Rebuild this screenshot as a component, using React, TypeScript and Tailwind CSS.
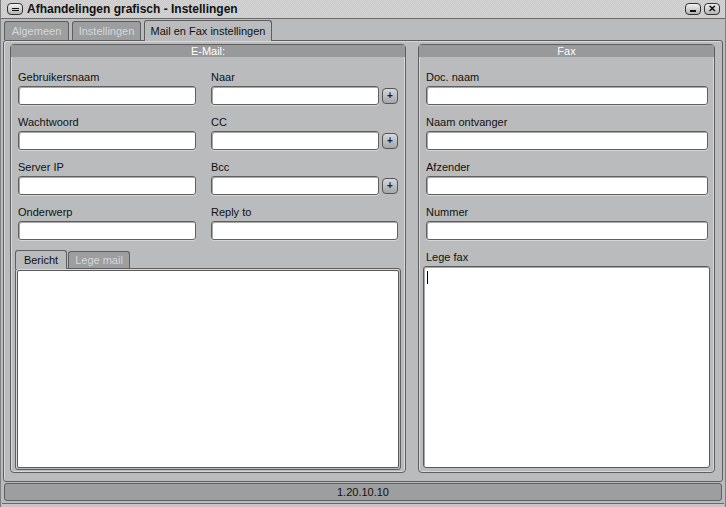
import React from "react";

const font = "font-['Liberation_Sans',Arial,sans-serif]";

function Field({ label, plus }: { label: string; plus?: boolean }) {
  return (
    <div className="flex flex-col">
      <div className="h-[16px] pt-[1px] text-[11px] leading-[16px] text-[#111]">{label}</div>
      <div className="mt-[2px] flex items-center gap-[3px]">
        <div className="h-[19px] flex-1 rounded-[3px] border border-[#5f5f5f] bg-white shadow-[inset_1px_1px_0_#a8a8a8,0_1px_0_#d4d6d8]" />
        {plus && (
          <div className="flex h-[16px] w-[16px] items-center justify-center rounded-[4px] border border-[#555] bg-gradient-to-b from-[#d6d8da] to-[#a4a6a8] text-[10px] font-bold leading-none text-[#102040]">
            +
          </div>
        )}
      </div>
    </div>
  );
}

function GroupHeader({ title }: { title: string }) {
  return (
    <div className="h-[12px] bg-[#97999b] text-center text-[11px] leading-[12px] text-white">{title}</div>
  );
}

function WinButton({ children }: { children: React.ReactNode }) {
  return (
    <div className="flex h-[12px] w-[16px] items-center justify-center rounded-[4px] border border-[#333] bg-gradient-to-b from-[#f2f2f2] to-[#b4b4b4]">
      {children}
    </div>
  );
}

export default function App() {
  return (
    <div className={`${font} flex h-[507px] w-[726px] flex-col overflow-hidden border-x border-[#7c7e80] bg-[#b9bbbd]`}>
      {/* Title bar */}
      <div className="flex h-[19px] shrink-0 items-center border-b border-[#6a6a6a] bg-[repeating-conic-gradient(#d6d6d6_0_25%,#c8c8c8_0_50%)] bg-[length:2px_2px] pl-[6px] pr-[5px]">
        <WinButton>
          <div className="flex flex-col gap-[1px]">
            <div className="h-[1px] w-[7px] bg-[#111]" />
            <div className="h-[1px] w-[7px] bg-[#111]" />
          </div>
        </WinButton>
        <div className="ml-[4px] text-[12px] font-bold leading-none text-[#111]">
          Afhandelingen grafisch - Instellingen
        </div>
        <div className="ml-auto flex gap-[3px]">
          <WinButton>
            <div className="mt-[3px] h-[2px] w-[6px] bg-[#111]" />
          </WinButton>
          <WinButton>
            <span className="text-[10px] font-bold leading-none text-[#111]">✕</span>
          </WinButton>
        </div>
      </div>

      {/* Tabs */}
      <div className="flex h-[21px] shrink-0 items-end gap-[3px] pl-[3px] pt-[1px]">
        <div className="flex h-[19px] w-[65px] items-center justify-center rounded-t-[3px] border border-b-0 border-[#5e5e5e] bg-[#9c9ea0] text-[11px] text-[#d6d8da]">
          Algemeen
        </div>
        <div className="flex h-[19px] w-[69px] items-center justify-center rounded-t-[3px] border border-b-0 border-[#5e5e5e] bg-[#9c9ea0] text-[11px] text-[#d6d8da]">
          Instellingen
        </div>
        <div className="relative top-[1px] flex h-[21px] w-[128px] items-center justify-center rounded-t-[3px] border border-b-0 border-[#5e5e5e] bg-[#b9bbbd] text-[11px] text-[#111]">
          Mail en Fax instellingen
        </div>
      </div>

      {/* Content panel */}
      <div className="mx-[2px] flex h-[442px] shrink-0 gap-[12px] rounded-[3px] border border-[#5e5e5e] pl-[6px] pr-[6px] pt-[3px] pb-[8px] shadow-[inset_1px_1px_0_#d6d8da]">
        {/* E-Mail group */}
        <div className="flex w-[396px] flex-col rounded-[4px] border border-[#5e5e5e] pb-[2px] shadow-[inset_1px_0_0_#d6d8da,inset_-1px_0_0_#d6d8da,inset_0_-1px_0_#d6d8da]">
          <GroupHeader title="E-Mail:" />
          <div className="grid grid-cols-[178px_187px] gap-x-[15px] gap-y-[8px] pl-[7px] pt-[11px]">
            <Field label="Gebruikersnaam" />
            <Field label="Naar" plus />
            <Field label="Wachtwoord" />
            <Field label="CC" plus />
            <Field label="Server IP" />
            <Field label="Bcc" plus />
            <Field label="Onderwerp" />
            <Field label="Reply to" />
          </div>
          <div className="mt-[9px] flex flex-1 flex-col px-[4px]">
            <div className="flex h-[19px] items-end">
              <div className="relative top-[1px] flex h-[19px] w-[52px] items-center justify-center rounded-t-[3px] border border-b-0 border-[#5e5e5e] bg-[#b9bbbd] text-[11px] text-[#111]">
                Bericht
              </div>
              <div className="ml-[1px] flex h-[17px] w-[62px] items-center justify-center rounded-t-[3px] border border-b-0 border-[#5e5e5e] bg-[#9c9ea0] text-[11px] text-[#d6d8da]">
                Lege mail
              </div>
            </div>
            <div className="flex flex-1 rounded-[3px] border border-[#5e5e5e] p-[1px] shadow-[inset_1px_1px_0_#d6d8da]">
              <div className="flex-1 rounded-[2px] border border-[#5a5a5a] bg-white" />
            </div>
          </div>
        </div>

        {/* Fax group */}
        <div className="flex w-[297px] flex-col rounded-[4px] border border-[#5e5e5e] pb-[4px] shadow-[inset_1px_0_0_#d6d8da,inset_-1px_0_0_#d6d8da,inset_0_-1px_0_#d6d8da]">
          <GroupHeader title="Fax" />
          <div className="flex flex-col gap-[8px] pl-[7px] pr-[6px] pt-[11px]">
            <Field label="Doc. naam" />
            <Field label="Naam ontvanger" />
            <Field label="Afzender" />
            <Field label="Nummer" />
          </div>
          <div className="mt-[8px] flex flex-1 flex-col px-[4px]">
            <div className="h-[16px] pl-[3px] pt-[1px] text-[11px] leading-[16px] text-[#111]">Lege fax</div>
            <div className="mt-[2px] flex-1 rounded-[3px] border border-[#5a5a5a] bg-white shadow-[inset_1px_1px_0_#a8a8a8]">
              <div className="ml-[3px] mt-[4px] h-[13px] w-px bg-black" />
            </div>
          </div>
        </div>
      </div>

      {/* Status bar */}
      <div className="mx-[3px] mt-[1px] flex h-[18px] shrink-0 items-center justify-center rounded-[3px] border border-[#5e5e5e] bg-[#9c9ea0] text-[11px] text-[#111]">
        1.20.10.10
      </div>
      <div className="mx-[1px] mt-[2px] flex-1 border-t border-[#6a6a6a] bg-[#c4c6c8]" />
    </div>
  );
}
